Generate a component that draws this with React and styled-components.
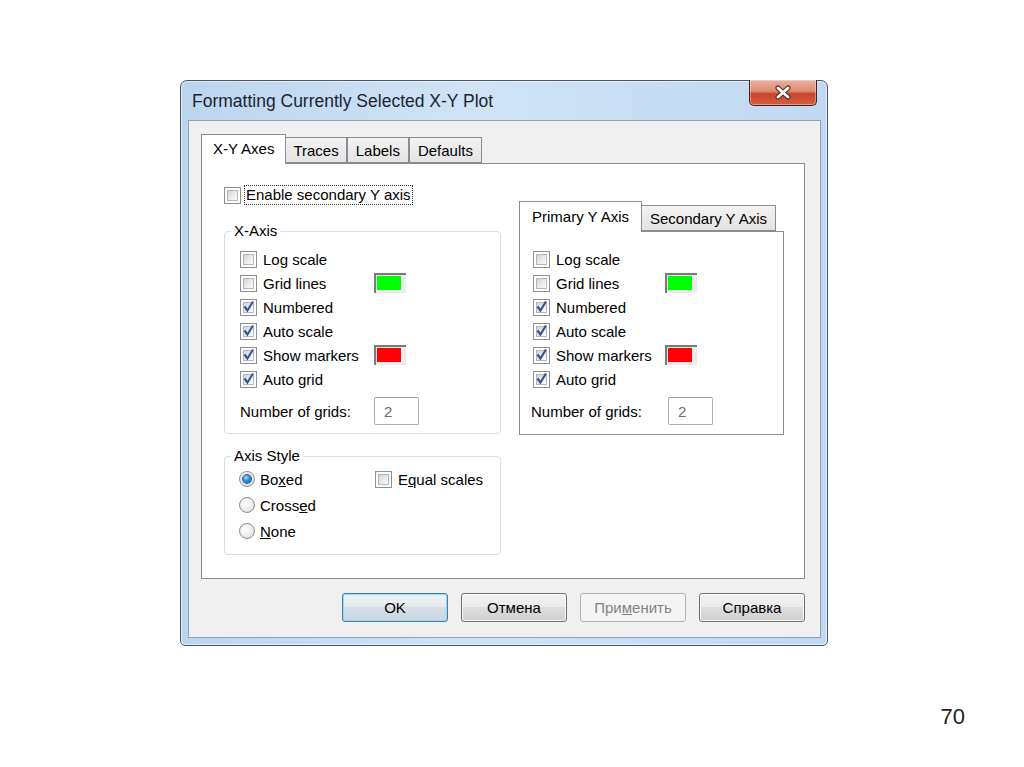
import React from 'react';
import styled, { createGlobalStyle, css } from 'styled-components';

const GlobalStyle = createGlobalStyle`
  html, body {
    margin: 0;
    padding: 0;
    background: #fff;
  }
  body {
    font-family: "Liberation Sans", Arial, sans-serif;
    color: #000;
  }
`;

const Page = styled.div`
  width: 1024px;
  height: 767px;
  box-sizing: border-box;
  padding: 80px 0 0 180px;
  display: flex;
  flex-direction: column;
  background: #fff;
`;

const Window = styled.div`
  width: 648px;
  box-sizing: border-box;
  border: 1px solid #4a5666;
  border-radius: 7px 7px 5px 5px;
  background: linear-gradient(90deg, #bcd5ef 0%, #d0e3f6 45%, #c0d8f1 100%);
  box-shadow: inset 0 0 0 1px rgba(255, 255, 255, 0.55);
  display: flex;
  flex-direction: column;
`;

const TitleBar = styled.div`
  height: 39px;
  display: flex;
  align-items: flex-start;
  justify-content: space-between;
  padding: 0 10px 0 11px;
`;

const Title = styled.div`
  font-size: 17.5px;
  line-height: 20px;
  padding-top: 10px;
  color: #1b2433;
`;

const CloseButton = styled.div`
  width: 68px;
  height: 26px;
  margin-top: -1px;
  box-sizing: border-box;
  border: 1px solid #4b1f17;
  border-top: none;
  border-radius: 0 0 5px 5px;
  background: linear-gradient(#eab0a2 0%, #de8a74 45%, #c8442a 55%, #d4603f 100%);
  box-shadow: inset 0 0 0 1px rgba(255, 255, 255, 0.35);
  display: flex;
  align-items: center;
  justify-content: center;
`;

const Client = styled.div`
  margin: 0 6px 7px 7px;
  border: 1px solid #8ea3ba;
  background: #f0f0f0;
  padding: 14px 15px 15px 12px;
  display: flex;
  flex-direction: column;
`;

const TabStrip = styled.div`
  display: flex;
  align-items: flex-end;
  height: ${p => p.h}px;
  position: relative;
  z-index: 1;
`;

const Tab = styled.div`
  box-sizing: border-box;
  display: flex;
  align-items: center;
  font-size: 15px;
  border: 1px solid #898c95;
  white-space: nowrap;
  ${p => p.active
    ? css`
        height: ${p.h + 1}px;
        margin-bottom: -1px;
        padding: 0 ${p.pad}px 2px;
        background: #fff;
        border-bottom: none;
      `
    : css`
        height: ${p.h}px;
        padding: 0 ${p.pad}px;
        background: linear-gradient(#f3f3f3, #e3e3e3);
        border-left: ${p.first ? 'none' : '1px solid #898c95'};
      `}
`;

const Panel = styled.div`
  height: 416px;
  box-sizing: border-box;
  border: 1px solid #898c95;
  background: #fff;
  padding: 22px 0 0 22px;
  display: flex;
  gap: 18px;
`;

const LeftCol = styled.div`
  width: 277px;
  display: flex;
  flex-direction: column;
`;

const RightCol = styled.div`
  width: 265px;
  margin-top: 15px;
  display: flex;
  flex-direction: column;
`;

const EnableRow = styled.div`
  height: 18px;
  display: flex;
  align-items: center;
  gap: 3px;
  margin-bottom: 18px;
  font-size: 15px;
`;

const FocusLabel = styled.span`
  border: 1px dotted #333;
  padding: 0 1px;
  line-height: 18px;
`;

const Group = styled.fieldset`
  margin: ${p => p.mt || 0}px 0 0;
  padding: 0;
  min-width: 0;
  border: 1px solid #d5dfe5;
  border-radius: 4px;
`;

const Legend = styled.legend`
  margin-left: 6px;
  padding: 0 3px;
  font-size: 15px;
  line-height: 18px;
`;

const GroupBody = styled.div`
  padding: ${p => p.pad};
  display: flex;
  flex-direction: column;
`;

const SubPanel = styled.div`
  border: 1px solid #898c95;
  background: #fff;
  padding: 15px 0 9px 13px;
  display: flex;
  flex-direction: column;
`;

const Row = styled.div`
  height: ${p => p.h || 24}px;
  margin-top: ${p => p.mt || 0}px;
  display: grid;
  grid-template-columns: ${p => p.col}px auto;
  align-items: center;
  font-size: 15px;
`;

const Label = styled.label`
  display: flex;
  align-items: center;
  gap: ${p => p.gap || 6}px;
  font-size: 15px;
  white-space: nowrap;
`;

const Box = styled.span`
  width: 17px;
  height: 17px;
  box-sizing: border-box;
  border: 1px solid #8e8f8f;
  background: #fff;
  padding: 2px;
  display: flex;
`;

const BoxInner = styled.span`
  flex: 1;
  border: 1px solid #b3b6ba;
  background: linear-gradient(135deg, #d2d4d7 0%, #eceef0 60%, #fafafa 100%);
  position: relative;
`;

const CheckMark = styled.svg`
  position: absolute;
  left: -3px;
  top: -4px;
`;

const Radio = styled.span`
  width: 16px;
  height: 16px;
  box-sizing: border-box;
  border-radius: 50%;
  border: 1px solid #8e8f8f;
  background: radial-gradient(circle at 40% 35%, #ffffff 0%, #ececec 55%, #cfcfcf 100%);
  display: flex;
  align-items: center;
  justify-content: center;
`;

const RadioDot = styled.span`
  width: 8px;
  height: 8px;
  border-radius: 50%;
  background: radial-gradient(circle at 40% 35%, #a9dcfb 0%, #2a8ad4 45%, #0c4f8e 100%);
  box-shadow: 0 0 0 1px #1d5f99;
`;

const Swatch = styled.span`
  width: 32px;
  height: 20px;
  box-sizing: border-box;
  background: #ececec;
  border-top: 2px solid #7a7a7a;
  border-left: 2px solid #7a7a7a;
  padding: 1px 5px 3px 1px;
  display: flex;
`;

const SwatchColor = styled.span`
  flex: 1;
  background: ${p => p.color};
`;

const NumberInput = styled.div`
  width: 45px;
  height: 28px;
  box-sizing: border-box;
  border: 1px solid #abadb3;
  border-top-color: #9a9ea6;
  border-radius: 2px;
  background: #fff;
  color: #6d6d6d;
  font-size: 15px;
  display: flex;
  align-items: center;
  padding-left: 9px;
`;

const AxisGrid = styled.div`
  display: grid;
  grid-template-columns: 136px auto;
  grid-auto-rows: 26px;
  align-items: center;
  padding: 1px 10px 10px 14px;
`;

const U = styled.span`
  text-decoration: underline;
`;

const ButtonRow = styled.div`
  display: flex;
  justify-content: flex-end;
  gap: 13px;
  margin-top: 14px;
`;

const Button = styled.div`
  width: 106px;
  height: 29px;
  box-sizing: border-box;
  border-radius: 3px;
  display: flex;
  align-items: center;
  justify-content: center;
  font-size: 15px;
  border: 1px solid #707070;
  background: linear-gradient(#f2f2f2 0%, #ebebeb 50%, #dddddd 50%, #cfcfcf 100%);
  box-shadow: inset 0 0 0 1px rgba(255, 255, 255, 0.75);
  ${p => p.primary && css`
    border-color: #3c7fb1;
    background: linear-gradient(#eef2f5 0%, #e4eaef 50%, #d5dee6 50%, #cad6e0 100%);
    box-shadow: inset 0 0 0 1px #9fd4f2;
  `}
  ${p => p.disabled && css`
    border-color: #adb2b5;
    background: #f4f4f4;
    box-shadow: none;
    color: #838383;
  `}
`;

const PageNumber = styled.div`
  align-self: flex-end;
  margin: 58px 59px 0 0;
  font-size: 22px;
  line-height: 26px;
  color: #222;
`;

function Check({ checked, children, gap }) {
  return (
    <Label gap={gap}>
      <Box>
        <BoxInner>
          {checked && (
            <CheckMark width="15" height="15" viewBox="0 0 15 15">
              <path d="M3.5 7.5 L6.4 11.5 L12 2.5" fill="none" stroke="#3b5599" strokeWidth="2.2" />
            </CheckMark>
          )}
        </BoxInner>
      </Box>
      {children && <span>{children}</span>}
    </Label>
  );
}

function RadioOption({ checked, children }) {
  return (
    <Label gap={5}>
      <Radio>{checked && <RadioDot />}</Radio>
      <span>{children}</span>
    </Label>
  );
}

function AxisRows({ col }) {
  return (
    <>
      <Row col={col}><Check>Log scale</Check></Row>
      <Row col={col}>
        <Check>Grid lines</Check>
        <Swatch><SwatchColor color="#00ff00" /></Swatch>
      </Row>
      <Row col={col}><Check checked>Numbered</Check></Row>
      <Row col={col}><Check checked>Auto scale</Check></Row>
      <Row col={col}>
        <Check checked>Show markers</Check>
        <Swatch><SwatchColor color="#ff0000" /></Swatch>
      </Row>
      <Row col={col}><Check checked>Auto grid</Check></Row>
    </>
  );
}

export default function App() {
  return (
    <Page>
      <GlobalStyle />
      <Window>
        <TitleBar>
          <Title>Formatting Currently Selected X-Y Plot</Title>
          <CloseButton>
            <svg width="18" height="15" viewBox="0 0 18 15">
              <path d="M4 3 L14 12 M14 3 L4 12" stroke="#4e2219" strokeWidth="5" strokeLinecap="round" />
              <path d="M4 3 L14 12 M14 3 L4 12" stroke="#fff" strokeWidth="3" strokeLinecap="round" />
            </svg>
          </CloseButton>
        </TitleBar>
        <Client>
          <TabStrip h={28}>
            <Tab active h={29} pad={11}>X-Y Axes</Tab>
            <Tab first h={26} pad={7}>Traces</Tab>
            <Tab h={26} pad={8}>Labels</Tab>
            <Tab h={26} pad={8}>Defaults</Tab>
          </TabStrip>
          <Panel>
            <LeftCol>
              <EnableRow>
                <Check gap={3}></Check>
                <FocusLabel>Enable secondary Y axis</FocusLabel>
              </EnableRow>
              <Group>
                <Legend>X-Axis</Legend>
                <GroupBody pad="7px 10px 8px 15px">
                  <AxisRows col={134} />
                  <Row col={134} h={28} mt={6}>
                    <span>Number of grids:</span>
                    <NumberInput>2</NumberInput>
                  </Row>
                </GroupBody>
              </Group>
              <Group mt={13}>
                <Legend>Axis Style</Legend>
                <AxisGrid>
                  <RadioOption checked>Bo<U>x</U>ed</RadioOption>
                  <Check>E<U>q</U>ual scales</Check>
                  <RadioOption>Cross<U>e</U>d</RadioOption>
                  <span />
                  <RadioOption><U>N</U>one</RadioOption>
                </AxisGrid>
              </Group>
            </LeftCol>
            <RightCol>
              <TabStrip h={30}>
                <Tab active h={30} pad={12}>Primary Y Axis</Tab>
                <Tab first h={26} pad={8}>Secondary Y Axis</Tab>
              </TabStrip>
              <SubPanel>
                <AxisRows col={132} />
                <Row col={135} h={28} mt={6}>
                  <span style={{ marginLeft: -2 }}>Number of grids:</span>
                  <NumberInput>2</NumberInput>
                </Row>
              </SubPanel>
            </RightCol>
          </Panel>
          <ButtonRow>
            <Button primary>OK</Button>
            <Button>Отмена</Button>
            <Button disabled>При<U>м</U>енить</Button>
            <Button>Справка</Button>
          </ButtonRow>
        </Client>
      </Window>
      <PageNumber>70</PageNumber>
    </Page>
  );
}
